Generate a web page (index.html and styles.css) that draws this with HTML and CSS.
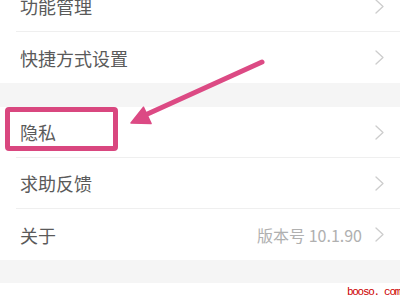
FILE: index.html
```html
<!DOCTYPE html>
<html lang="zh">
<head>
<meta charset="utf-8">
<link rel="stylesheet" href="styles.css">
</head>
<body>
<div class="screen">
  <div class="list first-list">
    <div class="row"><span class="label">功能管理</span><svg class="chev" width="9" height="15" viewBox="0 0 9 15"><polyline points="1,1 8,7.5 1,14"/></svg></div>
    <div class="row"><span class="label">快捷方式设置</span><svg class="chev" width="9" height="15" viewBox="0 0 9 15"><polyline points="1,1 8,7.5 1,14"/></svg></div>
  </div>
  <div class="gap"></div>
  <div class="list">
    <div class="row"><span class="label">隐私</span><svg class="chev" width="9" height="15" viewBox="0 0 9 15"><polyline points="1,1 8,7.5 1,14"/></svg></div>
    <div class="row"><span class="label">求助反馈</span><svg class="chev" width="9" height="15" viewBox="0 0 9 15"><polyline points="1,1 8,7.5 1,14"/></svg></div>
    <div class="row"><span class="label">关于</span><span class="value">版本号 10.1.90</span><svg class="chev" width="9" height="15" viewBox="0 0 9 15"><polyline points="1,1 8,7.5 1,14"/></svg></div>
  </div>
  <div class="gap gap2"></div>
  <div class="list">
    <div class="row"><span class="label">账号与安全</span></div>
  </div>

  <div class="highlight"></div>
  <svg class="arrow" width="400" height="300" viewBox="0 0 400 300">
    <line x1="262" y1="62" x2="143" y2="116"/>
    <polygon points="131,123 143.5,107.2 151.1,123.6"/>
  </svg>
  <div class="watermark">booso. com</div>
</div>
</body>
</html>
```

FILE: styles.css
```css
html, body {
  margin: 0;
  padding: 0;
  background: #ffffff;
}
.screen {
  position: relative;
  width: 400px;
  height: 300px;
  overflow: hidden;
  background: #ffffff;
  font-family: "Noto Sans CJK SC", "Noto Sans", sans-serif;
}
.first-list {
  margin-top: -19px;
}
.list {
  background: #ffffff;
}
.row {
  box-sizing: border-box;
  height: 51px;
  margin-left: 16px;
  padding: 0 16px 0 4px;
  display: flex;
  align-items: center;
  border-bottom: 1px solid #efefef;
}
.row:last-child {
  border-bottom: none;
}
.label {
  flex: 1;
  font-size: 18px;
  color: #5a5a5a;
  line-height: 1;
}
.value {
  font-size: 16px;
  color: #b0b0b0;
  margin-right: 13px;
  line-height: 1;
}
.chev polyline {
  fill: none;
  stroke: #cdcdcd;
  stroke-width: 1.3;
  stroke-linecap: round;
  stroke-linejoin: round;
}
.gap {
  height: 24px;
  background: #f5f5f5;
}
.gap2 {
  height: 23px;
}
.highlight {
  position: absolute;
  left: 5px;
  top: 107px;
  width: 113px;
  height: 44px;
  box-sizing: border-box;
  border: 5px solid #d9477f;
  border-radius: 4px;
}
.arrow {
  position: absolute;
  left: 0;
  top: 0;
}
.arrow line {
  stroke: #dc4a84;
  stroke-width: 5;
  stroke-linecap: round;
}
.arrow polygon {
  fill: #dc4a84;
  stroke: #dc4a84;
  stroke-width: 1.5;
  stroke-linejoin: round;
}
.watermark {
  position: absolute;
  left: 347px;
  top: 286px;
  font-family: "Liberation Mono", monospace;
  font-size: 11px;
  letter-spacing: -1.3px;
  color: #cc0000;
  line-height: 12px;
  background: #ffffff;
}
```
